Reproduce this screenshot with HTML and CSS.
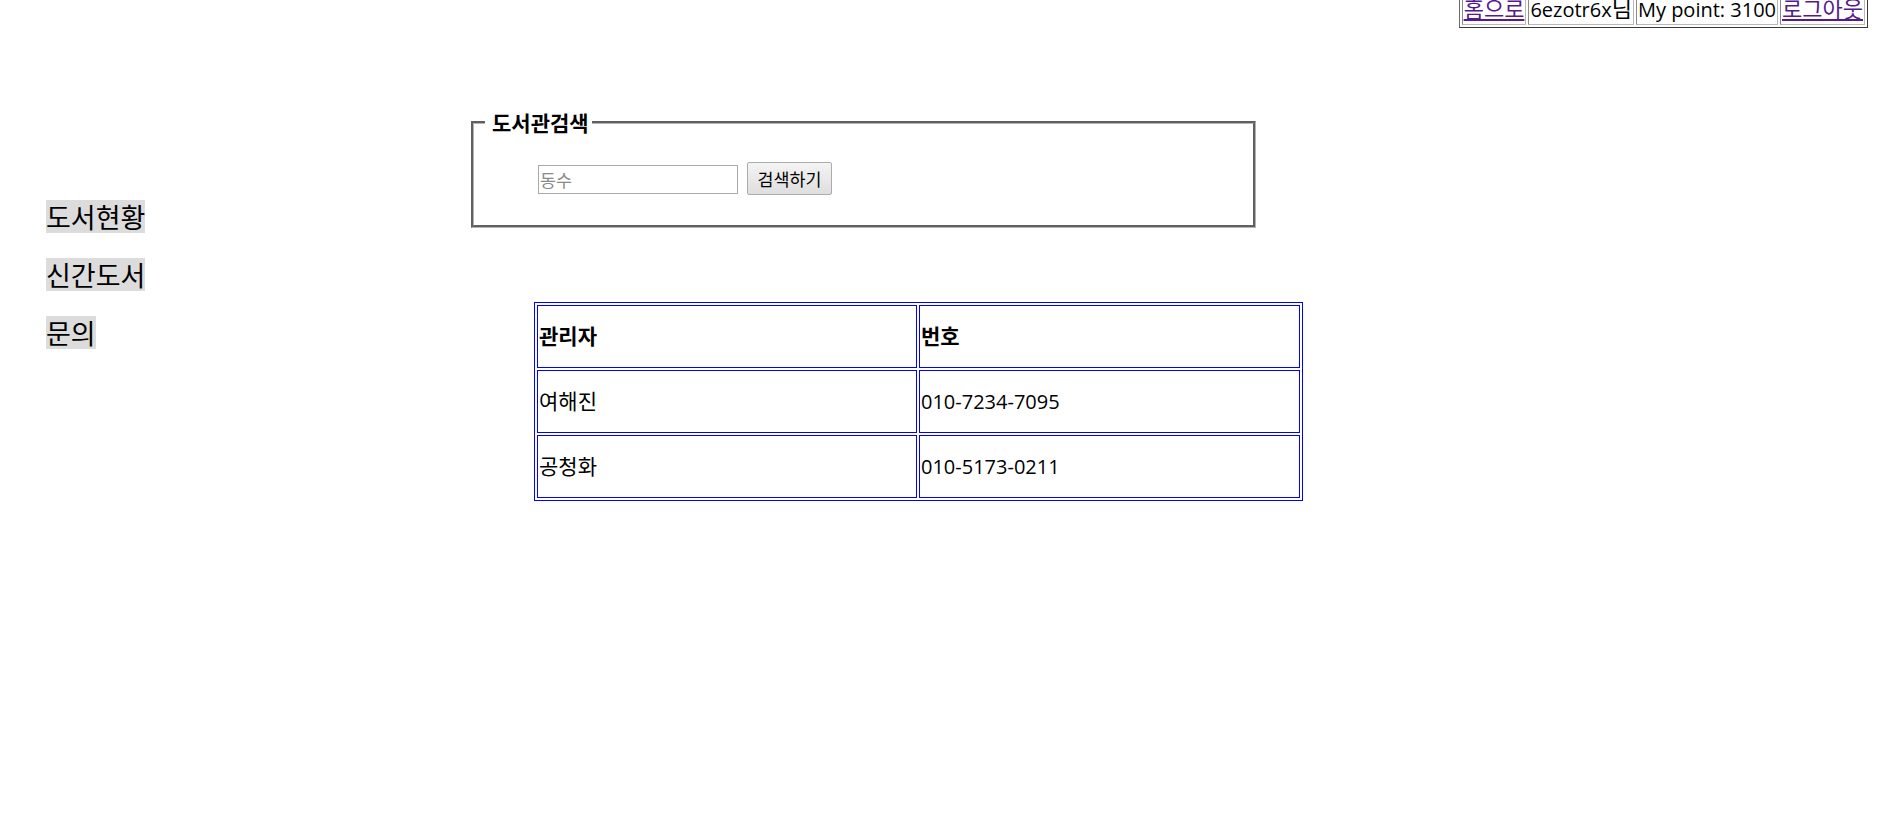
FILE: index.html
```html
<!DOCTYPE html>
<html lang="ko">
<head>
<meta charset="utf-8">
<title>도서관검색</title>
<link rel="stylesheet" href="styles.css">
</head>
<body>
<header class="topbar">
  <table class="usertable">
    <tr>
      <td><a href="#" class="visited ko">홈으로</a></td>
      <td>6ezotr6x<span class="ko">님</span></td>
      <td>My point: 3100</td>
      <td><a href="#" class="visited ko">로그아웃</a></td>
    </tr>
  </table>
</header>
<div class="layout">
  <nav class="sidebar">
    <div class="side-item">도서현황</div>
    <div class="side-item">신간도서</div>
    <div class="side-item">문의</div>
  </nav>
  <main class="main">
    <fieldset class="search">
      <legend class="search-legend">도서관검색</legend>
      <div class="search-row">
        <input class="search-input" type="text" placeholder="동수">
        <button class="search-btn" type="button">검색하기</button>
      </div>
    </fieldset>
    <table class="admins">
      <tr>
        <td class="head c1 ko">관리자</td>
        <td class="head c2 ko">번호</td>
      </tr>
      <tr>
        <td class="c1 ko">여해진</td>
        <td class="c2">010-7234-7095</td>
      </tr>
      <tr>
        <td class="c1 ko">공청화</td>
        <td class="c2">010-5173-0211</td>
      </tr>
    </table>
  </main>
</div>
</body>
</html>
```

FILE: styles.css
```css
html, body {
  margin: 0;
  padding: 0;
  background: #ffffff;
}

body {
  font-family: "Open Sans", "Noto Sans CJK KR", sans-serif;
  font-size: 20px;
  color: #000000;
}

.topbar {
  display: flex;
  justify-content: flex-end;
  padding-right: 10px;
  margin-top: -10px;
}

.usertable {
  border-collapse: separate;
  border-spacing: 2px;
  border: 1px solid;
  border-color: #6a6a6a #3a3a3a #3a3a3a #6a6a6a;
  font-size: 20px;
  line-height: 27px;
}

.usertable td {
  padding: 1px;
  border: 1px solid;
  border-color: #8a8a8a #b8b8b8 #b8b8b8 #8a8a8a;
  white-space: nowrap;
}

.usertable .ko {
  font-size: 22px;
  line-height: 27px;
}

.visited {
  color: #551a8b;
  text-decoration: underline;
}

.layout {
  display: grid;
  grid-template-columns: 471px 1fr;
}

.sidebar {
  padding-left: 46px;
  padding-top: 172px;
  display: flex;
  flex-direction: column;
  align-items: flex-start;
  gap: 25px;
}

.side-item {
  background: #dcdcdc;
  font-family: "Noto Sans CJK KR", sans-serif;
  font-size: 27px;
  line-height: 33px;
  height: 33px;
}

.main {
  padding-top: 81px;
}

.search {
  margin: 0;
  width: 785px;
  box-sizing: border-box;
  padding: 0 11px;
  border: 3px groove #b4b4b4;
  min-width: 0;
}

.search-legend {
  padding: 0 3px 0 7px;
  font-family: "Noto Sans CJK KR", sans-serif;
  font-weight: bold;
  font-size: 21px;
  line-height: 26px;
}

.search-row {
  display: flex;
  align-items: center;
  gap: 9px;
  padding: 27px 0 30px 53px;
}

.search-input {
  box-sizing: border-box;
  width: 200px;
  height: 29px;
  margin: 1px 0 0 0;
  padding: 1px 1px;
  border: 1px solid #a9a9a9;
  font-family: "Noto Sans CJK KR", sans-serif;
  font-size: 17.4px;
  color: #000;
  background: #fff;
  outline: none;
}

.search-input::placeholder {
  color: #8a8a8a;
}

.search-btn {
  box-sizing: border-box;
  width: 85px;
  height: 33px;
  padding: 0;
  border: 1px solid #acacac;
  border-radius: 2px;
  background: linear-gradient(#f4f4f4, #dedede);
  font-family: "Noto Sans CJK KR", sans-serif;
  font-size: 17.4px;
  color: #000;
}

.admins {
  margin: 74px 0 0 63px;
  border-collapse: separate;
  border-spacing: 2px;
  border: 1px solid #0000ff;
  font-size: 20px;
  line-height: 27px;
}

.admins td {
  box-sizing: border-box;
  height: 63px;
  padding: 1px;
  border: 1px solid #0000ff;
  vertical-align: middle;
  text-align: left;
}

.admins td.ko {
  font-size: 21px;
}

.admins .c1 {
  width: 380px;
}

.admins .c2 {
  width: 381px;
}

.admins .head {
  font-weight: bold;
}
```
